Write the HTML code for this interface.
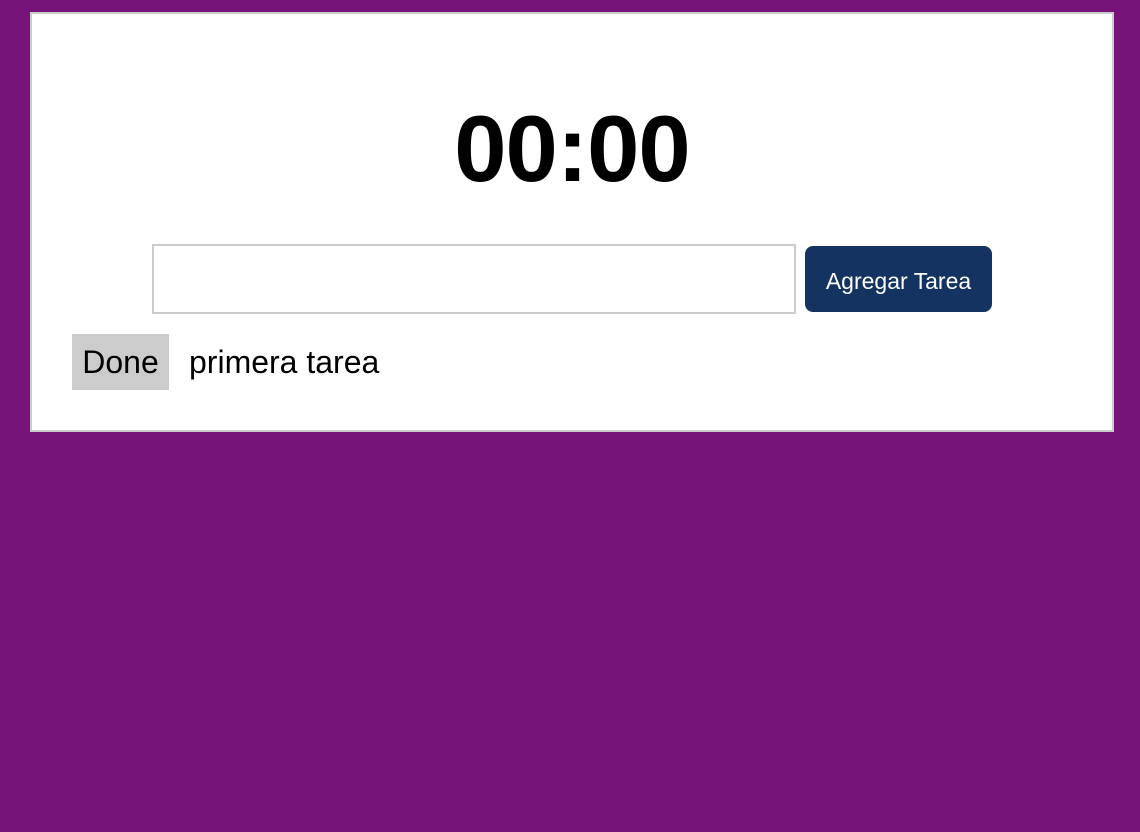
<!DOCTYPE html>
<html><head><style>
body{margin:0;width:1140px;height:832px;background:#77147a;font-family:"Liberation Sans",Arial,sans-serif;position:relative;overflow:hidden}
.card{position:absolute;left:30px;top:12px;width:1080px;height:416px;background:#fff;border:2px solid #ccc}
.t{position:absolute;left:0;right:0;top:83px;text-align:center;font-weight:bold;font-size:94px;line-height:104px;letter-spacing:-1px}
.in{position:absolute;left:120px;top:230px;width:640px;height:66px;border:2px solid #ccc;box-sizing:content-box}
.btn{position:absolute;left:773px;top:232px;width:187px;height:66px;background:#143360;border-radius:8px;color:#fff;font-size:23px;text-align:center;line-height:70px}
.done{position:absolute;left:40px;top:320px;width:97px;height:56px;background:#ccc;font-size:32px;line-height:56px;text-align:center}
.task{position:absolute;left:157px;top:320px;font-size:32px;line-height:56px}
</style></head><body>
<div class="card">
<div class="t">00:00</div>
<div class="in"></div>
<div class="btn">Agregar Tarea</div>
<div class="done">Done</div>
<div class="task">primera tarea</div>
</div>
</body></html>
